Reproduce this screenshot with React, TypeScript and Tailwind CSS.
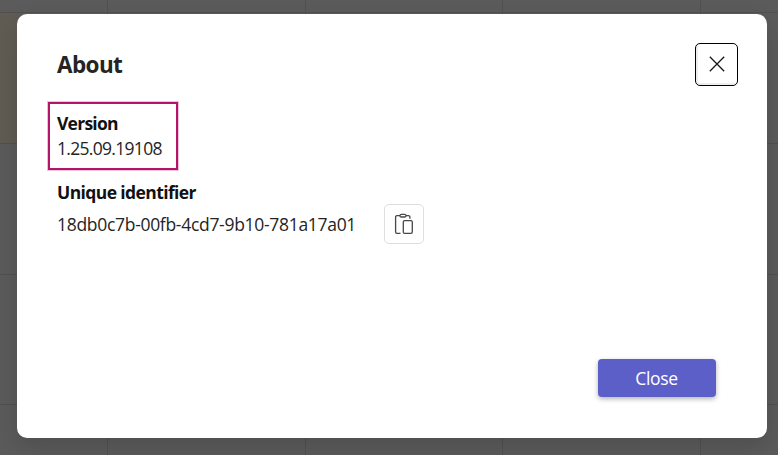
import React from "react";

function CalendarBackdrop() {
  const cells = Array.from({ length: 25 }, (_, i) => i);
  return (
    <div className="grid h-[457px] w-[780px] grid-cols-[108px_198px_197px_198px_79px] grid-rows-[13px_131px_131px_130px_52px] bg-[#5b5b5b]">
      {cells.map((i) => (
        <div key={i} className={`border-r border-b border-[#515151] ${i === 5 ? "bg-[#605c53]" : ""}`} />
      ))}
    </div>
  );
}

export default function App() {
  return (
    <div className="relative h-[455px] w-[778px] overflow-hidden font-['Open_Sans','Noto_Sans',sans-serif] text-[#242424]">
      <CalendarBackdrop />
      <div className="absolute inset-0 pt-[14px] pl-[17px]">
        <section
          role="dialog"
          className="flex h-[424px] w-[750px] flex-col rounded-[10px] bg-white pl-[31px] shadow-[0_10px_26px_rgba(0,0,0,0.14)]"
        >
          <header className="flex h-[88px] items-start justify-between pt-[29px] pr-[29px] pl-[9px]">
            <h1 className="text-[22.5px] leading-[44px] font-bold tracking-[-0.6px]">About</h1>
            <button
              aria-label="Dismiss"
              className="flex h-[43px] w-[43px] items-center justify-center rounded-[5px] border border-black bg-white pb-[2px] shadow-[inset_1px_-1px_0_1px_#eeeeee]"
            >
              <svg width="16" height="16" viewBox="0 0 16 16" fill="none" stroke="#171717" strokeWidth="1.3">
                <path d="M.8.8 15.2 15.2M15.2.8.8 15.2" />
              </svg>
            </button>
          </header>
          <div className="h-[68px] w-[130px] border-2 border-[#b51568] pt-[7px] pl-[7px] text-[17.5px] leading-[25px] whitespace-nowrap shadow-[0_0_0_1px_rgba(181,21,104,0.25)]">
            <h2 className="font-bold tracking-[-0.75px] text-[#111]">Version</h2>
            <p className="tracking-[-0.7px]">1.25.09.19108</p>
          </div>
          <div className="pt-[10px] pl-[9px] text-[17.5px] whitespace-nowrap">
            <h2 className="h-[24px] leading-[25px] font-bold tracking-[-0.6px] text-[#111]">Unique identifier</h2>
            <div className="flex h-[40px] items-center">
              <p className="w-[327px] tracking-[-0.3px]">18db0c7b-00fb-4cd7-9b10-781a17a01</p>
              <button
                aria-label="Copy identifier"
                className="flex h-[40px] w-[40px] items-center justify-center rounded-[5px] border border-[#dedede]"
              >
                <svg width="20" height="22" viewBox="0 0 20 22" fill="none" stroke="#484848" strokeWidth="1.3">
                  <path d="M6.5 20.4H3a1.4 1.4 0 0 1-1.4-1.4V4A1.4 1.4 0 0 1 3 2.6h3M12 2.6h2.5A1.4 1.4 0 0 1 15.9 4v1.7" />
                  <rect x="6" y="1.3" width="6" height="2.7" rx="1.3" />
                  <rect x="9.3" y="7.6" width="9" height="12.8" rx="1.3" />
                </svg>
              </button>
            </div>
          </div>
          <footer className="mt-auto flex justify-end pr-[51px] pb-[41px]">
            <button className="h-[38px] w-[118px] rounded-[4px] bg-[#5b5fc7] pr-[1px] text-[17.5px] tracking-[-0.3px] text-white shadow-[0_2px_5px_rgba(0,0,0,0.3)]">
              Close
            </button>
          </footer>
        </section>
      </div>
    </div>
  );
}
